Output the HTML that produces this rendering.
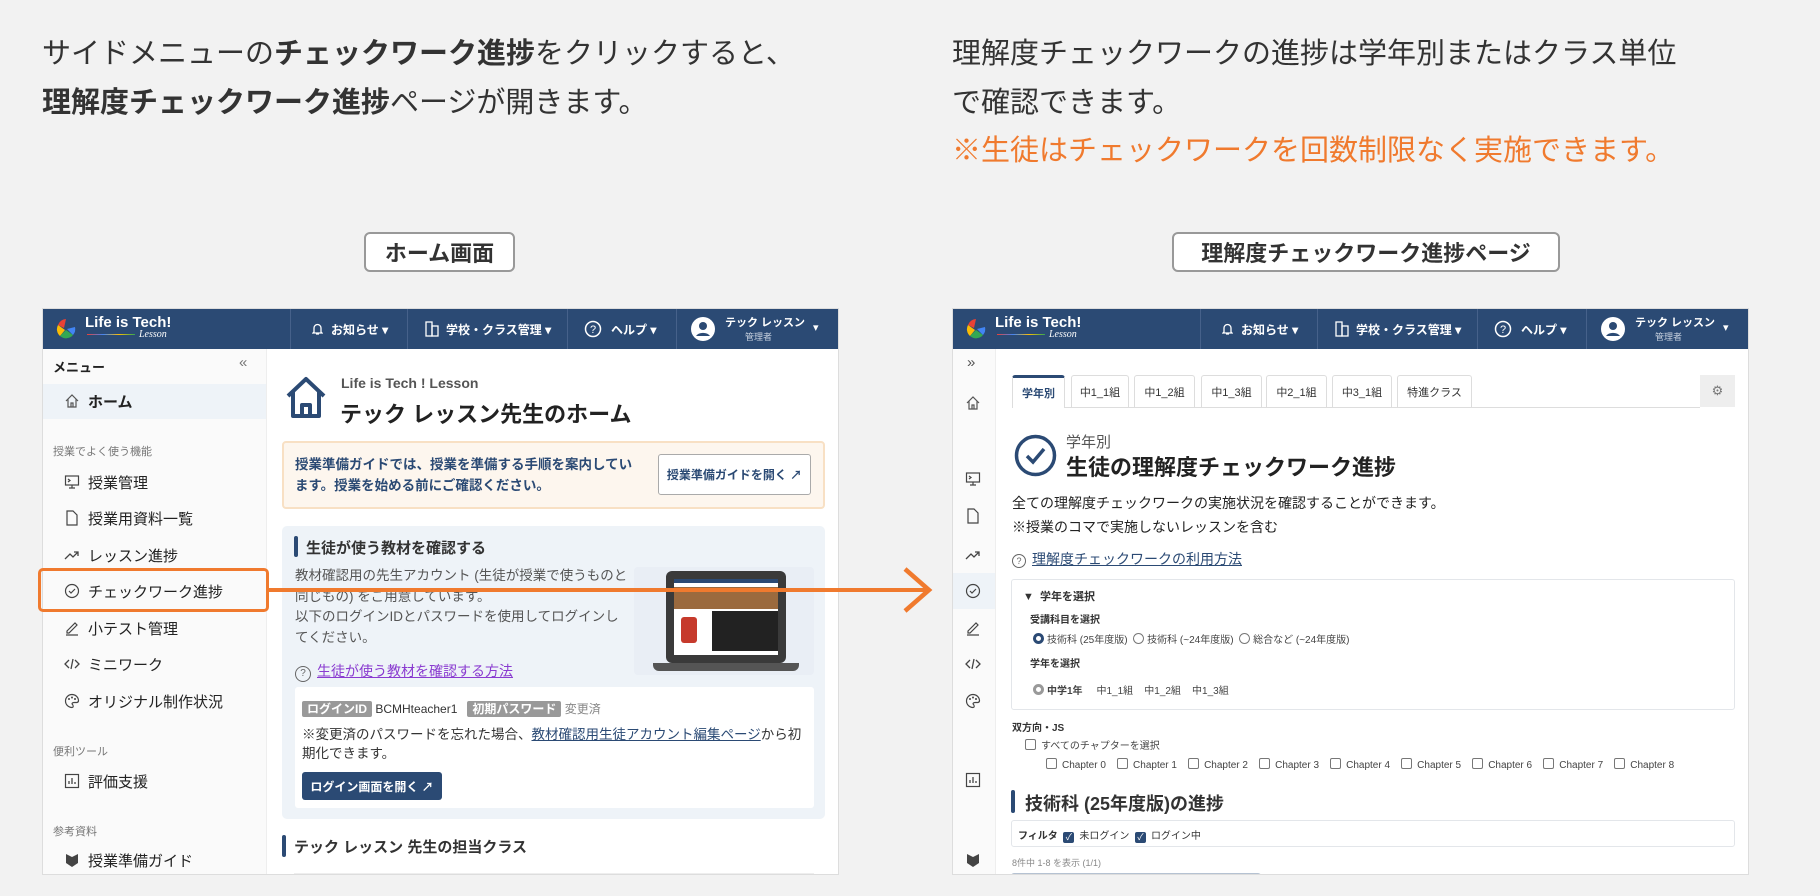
<!DOCTYPE html>
<html><head><meta charset="utf-8"><style>
*{margin:0;padding:0;box-sizing:border-box}
body{width:1820px;height:896px;background:#f2f2f2;font-family:"Liberation Sans","Noto Sans CJK JP",sans-serif;color:#222;position:relative;overflow:hidden}
.a{position:absolute;white-space:nowrap}
.big{font-size:29px;color:#333;line-height:1}
.label{position:absolute;top:232px;height:40px;border:2px solid #999;border-radius:6px;background:#fff;font-size:22px;font-weight:bold;color:#333;display:flex;align-items:center;justify-content:center}
.scr{position:absolute;top:308px;width:797px;height:567px;background:#fff;border:1px solid #ddd;overflow:hidden}
.nav{position:absolute;left:0;top:0;width:100%;height:40px;background:#2b4a74;color:#fff}
.nav .d{position:absolute;top:0;width:1px;height:40px;background:#46618a}
.nav .t{position:absolute;top:12px;font-size:12px;font-weight:bold}
.side{position:absolute;left:0;top:40px;bottom:0;background:#fafafa;border-right:1px solid #eee}
.it{position:absolute;left:0;width:224px;height:20px;font-size:15px;display:flex;align-items:center;color:#222}
.it svg{position:absolute;left:21px}
.it span{position:absolute;left:45px}
.sec{position:absolute;left:10px;font-size:11px;color:#777}
.ic{position:absolute;left:12px}
.tab{position:absolute;top:66px;height:32px;border:1px solid #ddd;border-bottom:none;font-size:11px;display:flex;align-items:center;justify-content:center;background:#fff;color:#333;border-radius:3px 3px 0 0}
.cb{display:inline-block;width:11px;height:11px;border:1px solid #777;border-radius:2px;vertical-align:-1px;margin-right:5px;background:#fff}
.rd{display:inline-block;width:11px;height:11px;border:1px solid #777;border-radius:50%;vertical-align:-1px;margin-right:3px}
</style></head><body>

<div class="a big" style="left:42px;top:40px">サイドメニューの<b>チェックワーク進捗</b>をクリックすると、</div>
<div class="a big" style="left:42px;top:89px"><b>理解度チェックワーク進捗</b>ページが開きます。</div>
<div class="a big" style="left:952px;top:40px">理解度チェックワークの進捗は学年別またはクラス単位</div>
<div class="a big" style="left:952px;top:89px">で確認できます。</div>
<div class="a big" style="left:952px;top:137px;color:#f07a2e">※生徒はチェックワークを回数制限なく実施できます。</div>

<div class="label" style="left:364px;width:151px">ホーム画面</div>
<div class="label" style="left:1172px;width:388px">理解度チェックワーク進捗ページ</div>

<!-- LEFT SCREEN -->
<div class="scr" style="left:42px">
 <div class="nav">
  <svg class="a" style="left:12px;top:8px" width="22" height="24" viewBox="0 0 22 24"><path d="M11 2 A9 9 0 0 0 3 8 L9 11Z" fill="#e94235"/><path d="M3 8 A9 9 0 0 0 5 19 L10 13Z" fill="#fbbc05"/><path d="M5 19 A9 9 0 0 0 18 18 L11 13Z" fill="#34a853"/><path d="M18 18 A9 9 0 0 0 20 10 L12 12Z" fill="#4285f4"/></svg>
  <div class="a" style="left:42px;top:5px;font-size:15px;font-weight:bold">Life is Tech!</div>
  <div class="a" style="left:44px;top:25px;width:48px;height:1px;background:linear-gradient(90deg,#e94235,#4285f4,#fbbc05,#34a853)"></div>
  <div class="a" style="left:96px;top:20px;font-size:10px;font-style:italic;font-family:'Liberation Serif',serif">Lesson</div>
  <div class="d" style="left:247px"></div><div class="d" style="left:364px"></div><div class="d" style="left:524px"></div><div class="d" style="left:633px"></div>
  <svg class="a" style="left:269px;top:13px" width="11" height="14" viewBox="0 0 11 14"><path d="M2 10V6a3.5 3.5 0 0 1 7 0v4l1 1H1z M4 12h3" stroke="#fff" fill="none" stroke-width="1.3"/></svg>
  <div class="t" style="left:288px">お知らせ ▾</div>
  <svg class="a" style="left:382px;top:12px" width="14" height="16" viewBox="0 0 14 16"><rect x="1" y="1" width="6" height="14" stroke="#fff" fill="none" stroke-width="1.3"/><rect x="7" y="5" width="6" height="10" stroke="#fff" fill="none" stroke-width="1.3"/></svg>
  <div class="t" style="left:403px">学校・クラス管理 ▾</div>
  <svg class="a" style="left:541px;top:11px" width="18" height="18" viewBox="0 0 18 18"><circle cx="9" cy="9" r="7.5" stroke="#fff" fill="none" stroke-width="1.5"/><text x="9" y="13" font-size="11" fill="#fff" text-anchor="middle" font-family="Liberation Sans">?</text></svg>
  <div class="t" style="left:568px">ヘルプ ▾</div>
  <svg class="a" style="left:648px;top:8px" width="24" height="24" viewBox="0 0 24 24"><circle cx="12" cy="12" r="12" fill="#fff"/><circle cx="12" cy="9" r="4" fill="#2b4a74"/><path d="M5 19a8 6 0 0 1 14 0z" fill="#2b4a74"/></svg>
  <div class="a" style="left:682px;top:5px;font-size:11px;font-weight:bold">テック レッスン</div>
  <div class="a" style="left:702px;top:21px;font-size:9px;color:#c8d2e0">管理者</div>
  <div class="a" style="left:770px;top:12px;font-size:11px">▾</div>
 </div>
 <div class="side" style="width:224px">
  <div class="a" style="left:10px;top:8px;font-size:13px;font-weight:bold">メニュー</div>
  <div class="a" style="left:196px;top:5px;font-size:15px;color:#777">«</div>
  <div class="a" style="left:0;top:35px;width:223px;height:35px;background:#eef3f8"></div>
 </div>
 <div class="it" style="top:82px;font-weight:bold"><svg width="16" height="16" viewBox="0 0 16 16"><path d="M2 8L8 2l6 6M4 6v8h8V6M7 14v-4h2v4" stroke="#555" fill="none" stroke-width="1.2"/></svg><span>ホーム</span></div>
 <div class="sec" style="top:134px">授業でよく使う機能</div>
 <div class="it" style="top:163px"><svg width="16" height="16" viewBox="0 0 16 16"><rect x="1.5" y="2" width="13" height="9" stroke="#444" fill="none" stroke-width="1.2"/><path d="M4 5l2 1.5L4 8M8 11v3M5 14h6" stroke="#444" fill="none" stroke-width="1.2"/></svg><span>授業管理</span></div>
 <div class="it" style="top:199px"><svg width="16" height="16" viewBox="0 0 16 16"><path d="M3 1h6l4 4v10H3z" stroke="#444" fill="none" stroke-width="1.2"/></svg><span>授業用資料一覧</span></div>
 <div class="it" style="top:236px"><svg width="16" height="16" viewBox="0 0 16 16"><path d="M1 12l5-5 3 3 5-5M10 5h4v4" stroke="#444" fill="none" stroke-width="1.3"/></svg><span>レッスン進捗</span></div>
 <div class="it" style="top:272px"><svg width="16" height="16" viewBox="0 0 16 16"><circle cx="8" cy="8" r="6.5" stroke="#444" fill="none" stroke-width="1.2"/><path d="M5 8l2 2 4-4" stroke="#444" fill="none" stroke-width="1.2"/></svg><span>チェックワーク進捗</span></div>
 <div class="it" style="top:309px"><svg width="16" height="16" viewBox="0 0 16 16"><path d="M3 11l8-8 2 2-8 8H3zM2 15h12" stroke="#444" fill="none" stroke-width="1.2"/></svg><span>小テスト管理</span></div>
 <div class="it" style="top:345px"><svg width="16" height="16" viewBox="0 0 16 16"><path d="M5 4L1 8l4 4M11 4l4 4-4 4M9 3L7 13" stroke="#444" fill="none" stroke-width="1.3"/></svg><span>ミニワーク</span></div>
 <div class="it" style="top:382px"><svg width="16" height="16" viewBox="0 0 16 16"><path d="M8 1.5a6.5 6.5 0 1 0 0 13c1.5 0 1.5-2 0.5-3s0-2 1.5-2h3a2 2 0 0 0 1.5-2A6.5 6.5 0 0 0 8 1.5z" stroke="#444" fill="none" stroke-width="1.2"/><circle cx="5" cy="6" r="1" fill="#444"/><circle cx="8" cy="4.5" r="1" fill="#444"/><circle cx="11" cy="6" r="1" fill="#444"/></svg><span>オリジナル制作状況</span></div>
 <div class="sec" style="top:434px">便利ツール</div>
 <div class="it" style="top:462px"><svg width="16" height="16" viewBox="0 0 16 16"><rect x="1.5" y="1.5" width="13" height="13" stroke="#444" fill="none" stroke-width="1.2"/><path d="M5 11V8M8 11V5M11 11V9" stroke="#444" stroke-width="1.3"/></svg><span>評価支援</span></div>
 <div class="sec" style="top:514px">参考資料</div>
 <div class="it" style="top:541px"><svg width="16" height="16" viewBox="0 0 16 16"><path d="M2 2l6 3 6-3v9l-6 4-6-4z" fill="#444"/></svg><span>授業準備ガイド</span></div>

 <!-- main -->
 <svg class="a" style="left:242px;top:67px" width="42" height="43" viewBox="0 0 42 43"><path d="M3 20L21 3l18 17M8 15v25h26V15M17 40V29h8v11" stroke="#2b4a74" fill="none" stroke-width="4" stroke-linejoin="round"/></svg>
 <div class="a" style="left:298px;top:66px;font-size:14px;color:#555;font-weight:bold">Life is Tech ! Lesson</div>
 <div class="a" style="left:297px;top:88px;font-size:22px;font-weight:bold">テック レッスン先生のホーム</div>
 <div class="a" style="left:239px;top:132px;width:543px;height:68px;background:#fdf6ee;border:2px solid #f8e0c4;border-radius:4px"></div>
 <div class="a" style="left:252px;top:145px;width:340px;white-space:normal;font-size:13.5px;font-weight:bold;color:#2b4a74;line-height:21px">授業準備ガイドでは、授業を準備する手順を案内しています。授業を始める前にご確認ください。</div>
 <div class="a" style="left:615px;top:145px;width:153px;height:41px;background:#fff;border:1px solid #aaa;border-radius:3px;font-size:12px;font-weight:bold;color:#2b4a74;display:flex;align-items:center;justify-content:center">授業準備ガイドを開く ↗</div>
 <div class="a" style="left:239px;top:217px;width:543px;height:293px;background:#eef3f8;border-radius:5px"></div>
 <div class="a" style="left:251px;top:227px;width:4px;height:21px;background:#2b4a74;border-radius:2px"></div>
 <div class="a" style="left:263px;top:228px;font-size:15px;font-weight:bold;color:#333">生徒が使う教材を確認する</div>
 <div class="a" style="left:252px;top:257px;width:336px;white-space:normal;font-size:13.5px;color:#555;line-height:20.5px">教材確認用の先生アカウント (生徒が授業で使うものと同じもの) をご用意しています。<br>以下のログインIDとパスワードを使用してログインしてください。</div>
 <div class="a" style="left:252px;top:352px;font-size:14px;color:#8a3bd0;text-decoration:underline"><span style="display:inline-block;width:16px;height:16px;border:1.5px solid #666;border-radius:50%;font-size:10px;color:#666;text-align:center;line-height:13px;text-decoration:none;margin-right:6px">?</span>生徒が使う教材を確認する方法</div>
 <div class="a" style="left:591px;top:258px;width:180px;height:108px;background:#e9eef5;border-radius:4px"></div>
 <div class="a" style="left:623px;top:262px;width:120px;height:92px;background:#3a3a3a;border-radius:6px"></div>
 <div class="a" style="left:631px;top:270px;width:104px;height:76px;background:#fff"></div>
 <div class="a" style="left:631px;top:270px;width:104px;height:4px;background:#2b4a74"></div>
 <div class="a" style="left:631px;top:278px;width:104px;height:22px;background:#9b6a3e"></div>
 <div class="a" style="left:669px;top:302px;width:66px;height:40px;background:#222"></div>
 <div class="a" style="left:638px;top:308px;width:16px;height:26px;background:#c63a2c;border-radius:3px"></div>
 <div class="a" style="left:610px;top:354px;width:146px;height:8px;background:#555;border-radius:0 0 6px 6px"></div>
 <div class="a" style="left:252px;top:378px;width:519px;height:121px;background:#fff;border-radius:3px"></div>
 <div class="a" style="left:259px;top:391px;font-size:12px;color:#333"><span style="background:#999;color:#fff;font-weight:bold;padding:1px 5px;border-radius:2px">ログインID</span> BCMHteacher1 &nbsp; <span style="background:#999;color:#fff;font-weight:bold;padding:1px 5px;border-radius:2px">初期パスワード</span> <span style="color:#888">変更済</span></div>
 <div class="a" style="left:259px;top:416px;width:505px;white-space:normal;font-size:13.5px;color:#333;line-height:19px">※変更済のパスワードを忘れた場合、<span style="color:#2b4a74;text-decoration:underline">教材確認用生徒アカウント編集ページ</span>から初期化できます。</div>
 <div class="a" style="left:259px;top:463px;width:140px;height:28px;background:#2b4a74;border-radius:3px;color:#fff;font-size:12px;font-weight:bold;display:flex;align-items:center;justify-content:center">ログイン画面を開く ↗</div>
 <div class="a" style="left:239px;top:526px;width:4px;height:22px;background:#2b4a74;border-radius:2px"></div>
 <div class="a" style="left:251px;top:527px;font-size:15px;font-weight:bold;color:#333">テック レッスン 先生の担当クラス</div>
 <div class="a" style="left:251px;top:564px;width:520px;height:3px;background:#eee"></div>
</div>

<!-- orange box and arrow -->
<div class="a" style="left:38px;top:568px;width:231px;height:44px;border:3px solid #f07a2e;border-radius:5px"></div>
<div class="a" style="left:269px;top:588px;width:658px;height:4px;background:#f07a2e"></div>
<svg class="a" style="left:900px;top:566px" width="34" height="48" viewBox="0 0 34 48"><path d="M5 3L29 24 5 45" stroke="#f07a2e" stroke-width="4.5" fill="none"/></svg>

<!-- RIGHT SCREEN -->
<div class="scr" style="left:952px">
 <div class="nav">
  <svg class="a" style="left:12px;top:8px" width="22" height="24" viewBox="0 0 22 24"><path d="M11 2 A9 9 0 0 0 3 8 L9 11Z" fill="#e94235"/><path d="M3 8 A9 9 0 0 0 5 19 L10 13Z" fill="#fbbc05"/><path d="M5 19 A9 9 0 0 0 18 18 L11 13Z" fill="#34a853"/><path d="M18 18 A9 9 0 0 0 20 10 L12 12Z" fill="#4285f4"/></svg>
  <div class="a" style="left:42px;top:5px;font-size:15px;font-weight:bold">Life is Tech!</div>
  <div class="a" style="left:44px;top:25px;width:48px;height:1px;background:linear-gradient(90deg,#e94235,#4285f4,#fbbc05,#34a853)"></div>
  <div class="a" style="left:96px;top:20px;font-size:10px;font-style:italic;font-family:'Liberation Serif',serif">Lesson</div>
  <div class="d" style="left:247px"></div><div class="d" style="left:364px"></div><div class="d" style="left:524px"></div><div class="d" style="left:633px"></div>
  <svg class="a" style="left:269px;top:13px" width="11" height="14" viewBox="0 0 11 14"><path d="M2 10V6a3.5 3.5 0 0 1 7 0v4l1 1H1z M4 12h3" stroke="#fff" fill="none" stroke-width="1.3"/></svg>
  <div class="t" style="left:288px">お知らせ ▾</div>
  <svg class="a" style="left:382px;top:12px" width="14" height="16" viewBox="0 0 14 16"><rect x="1" y="1" width="6" height="14" stroke="#fff" fill="none" stroke-width="1.3"/><rect x="7" y="5" width="6" height="10" stroke="#fff" fill="none" stroke-width="1.3"/></svg>
  <div class="t" style="left:403px">学校・クラス管理 ▾</div>
  <svg class="a" style="left:541px;top:11px" width="18" height="18" viewBox="0 0 18 18"><circle cx="9" cy="9" r="7.5" stroke="#fff" fill="none" stroke-width="1.5"/><text x="9" y="13" font-size="11" fill="#fff" text-anchor="middle" font-family="Liberation Sans">?</text></svg>
  <div class="t" style="left:568px">ヘルプ ▾</div>
  <svg class="a" style="left:648px;top:8px" width="24" height="24" viewBox="0 0 24 24"><circle cx="12" cy="12" r="12" fill="#fff"/><circle cx="12" cy="9" r="4" fill="#2b4a74"/><path d="M5 19a8 6 0 0 1 14 0z" fill="#2b4a74"/></svg>
  <div class="a" style="left:682px;top:5px;font-size:11px;font-weight:bold">テック レッスン</div>
  <div class="a" style="left:702px;top:21px;font-size:9px;color:#c8d2e0">管理者</div>
  <div class="a" style="left:770px;top:12px;font-size:11px">▾</div>
 </div>
 <div class="side" style="width:43px">
  <div class="a" style="left:0;top:224px;width:42px;height:36px;background:#eef3f8"></div>
 </div>
 <div class="a" style="left:14px;top:45px;font-size:15px;color:#555">»</div>
 <svg class="ic" style="top:86px" width="16" height="16" viewBox="0 0 16 16"><path d="M2 8L8 2l6 6M4 6v8h8V6M7 14v-4h2v4" stroke="#555" fill="none" stroke-width="1.2"/></svg>
 <svg class="ic" style="top:162px" width="16" height="16" viewBox="0 0 16 16"><rect x="1.5" y="2" width="13" height="9" stroke="#444" fill="none" stroke-width="1.2"/><path d="M4 5l2 1.5L4 8M8 11v3M5 14h6" stroke="#444" fill="none" stroke-width="1.2"/></svg>
 <svg class="ic" style="top:199px" width="16" height="16" viewBox="0 0 16 16"><path d="M3 1h6l4 4v10H3z" stroke="#444" fill="none" stroke-width="1.2"/></svg>
 <svg class="ic" style="top:238px" width="16" height="16" viewBox="0 0 16 16"><path d="M1 12l5-5 3 3 5-5M10 5h4v4" stroke="#444" fill="none" stroke-width="1.3"/></svg>
 <svg class="ic" style="top:274px" width="16" height="16" viewBox="0 0 16 16"><circle cx="8" cy="8" r="6.5" stroke="#444" fill="none" stroke-width="1.2"/><path d="M5 8l2 2 4-4" stroke="#444" fill="none" stroke-width="1.2"/></svg>
 <svg class="ic" style="top:311px" width="16" height="16" viewBox="0 0 16 16"><path d="M3 11l8-8 2 2-8 8H3zM2 15h12" stroke="#444" fill="none" stroke-width="1.2"/></svg>
 <svg class="ic" style="top:347px" width="16" height="16" viewBox="0 0 16 16"><path d="M5 4L1 8l4 4M11 4l4 4-4 4M9 3L7 13" stroke="#444" fill="none" stroke-width="1.3"/></svg>
 <svg class="ic" style="top:384px" width="16" height="16" viewBox="0 0 16 16"><path d="M8 1.5a6.5 6.5 0 1 0 0 13c1.5 0 1.5-2 0.5-3s0-2 1.5-2h3a2 2 0 0 0 1.5-2A6.5 6.5 0 0 0 8 1.5z" stroke="#444" fill="none" stroke-width="1.2"/><circle cx="5" cy="6" r="1" fill="#444"/><circle cx="8" cy="4.5" r="1" fill="#444"/><circle cx="11" cy="6" r="1" fill="#444"/></svg>
 <svg class="ic" style="top:463px" width="16" height="16" viewBox="0 0 16 16"><rect x="1.5" y="1.5" width="13" height="13" stroke="#444" fill="none" stroke-width="1.2"/><path d="M5 11V8M8 11V5M11 11V9" stroke="#444" stroke-width="1.3"/></svg>
 <svg class="ic" style="top:543px" width="16" height="16" viewBox="0 0 16 16"><path d="M2 2l6 3 6-3v9l-6 4-6-4z" fill="#444"/></svg>

 <div class="a" style="left:59px;top:98px;width:688px;height:1px;background:#ddd"></div>
 <div class="tab" style="left:59px;width:53px;border-top:3px solid #2b4a74;color:#2b4a74;font-weight:bold;height:33px">学年別</div>
 <div class="tab" style="left:118px;width:58px">中1_1組</div>
 <div class="tab" style="left:181px;width:61px">中1_2組</div>
 <div class="tab" style="left:248px;width:61px">中1_3組</div>
 <div class="tab" style="left:313px;width:61px">中2_1組</div>
 <div class="tab" style="left:379px;width:60px">中3_1組</div>
 <div class="tab" style="left:444px;width:75px">特進クラス</div>
 <div class="a" style="left:747px;top:66px;width:35px;height:32px;background:#eee;color:#777;font-size:13px;text-align:center;line-height:32px">⚙</div>

 <svg class="a" style="left:61px;top:125px" width="43" height="43" viewBox="0 0 43 43"><circle cx="21.5" cy="21.5" r="19" stroke="#2b4a74" stroke-width="3.5" fill="none"/><path d="M13 22l6 6 11-13" stroke="#2b4a74" stroke-width="3.5" fill="none"/></svg>
 <div class="a" style="left:113px;top:122px;font-size:15px;color:#555">学年別</div>
 <div class="a" style="left:113px;top:141px;font-size:22px;font-weight:bold">生徒の理解度チェックワーク進捗</div>
 <div class="a" style="left:59px;top:184px;font-size:14px">全ての理解度チェックワークの実施状況を確認することができます。</div>
 <div class="a" style="left:59px;top:208px;font-size:14px">※授業のコマで実施しないレッスンを含む</div>
 <div class="a" style="left:59px;top:240px;font-size:14px;color:#2b4a74;text-decoration:underline"><span style="display:inline-block;width:14px;height:14px;border:1.3px solid #666;border-radius:50%;font-size:9px;color:#666;text-align:center;line-height:12px;margin-right:6px">?</span>理解度チェックワークの利用方法</div>
 <div class="a" style="left:58px;top:270px;width:724px;height:131px;border:1px solid #e3e6ea;border-radius:3px"></div>
 <div class="a" style="left:70px;top:279px;font-size:11px;font-weight:bold;color:#333">▼ &nbsp;学年を選択</div>
 <div class="a" style="left:77px;top:302px;font-size:10px;font-weight:bold;color:#333">受講科目を選択</div>
 <div class="a" style="left:80px;top:322px;font-size:10px;color:#444"><span class="rd" style="border:3px solid #2b4a74"></span>技術科 (25年度版) &nbsp;<span class="rd"></span>技術科 (~24年度版) &nbsp;<span class="rd"></span>総合など (~24年度版)</div>
 <div class="a" style="left:77px;top:346px;font-size:10px;font-weight:bold;color:#333">学年を選択</div>
 <div class="a" style="left:80px;top:373px;font-size:10px;color:#444"><span class="rd" style="border:3px solid #999"></span><b>中学1年</b> &nbsp;&nbsp;&nbsp; 中1_1組 &nbsp;&nbsp; 中1_2組 &nbsp;&nbsp; 中1_3組</div>
 <div class="a" style="left:59px;top:410px;font-size:10px;font-weight:bold;color:#333">双方向・JS</div>
 <div class="a" style="left:72px;top:428px;font-size:10px;color:#444"><span class="cb"></span>すべてのチャプターを選択</div>
 <div class="a" style="left:93px;top:449px;font-size:10px;color:#444"><span class="cb"></span>Chapter 0 &nbsp;&nbsp; <span class="cb"></span>Chapter 1 &nbsp;&nbsp; <span class="cb"></span>Chapter 2 &nbsp;&nbsp; <span class="cb"></span>Chapter 3 &nbsp;&nbsp; <span class="cb"></span>Chapter 4 &nbsp;&nbsp; <span class="cb"></span>Chapter 5 &nbsp;&nbsp; <span class="cb"></span>Chapter 6 &nbsp;&nbsp; <span class="cb"></span>Chapter 7 &nbsp;&nbsp; <span class="cb"></span>Chapter 8</div>
 <div class="a" style="left:58px;top:481px;width:4px;height:23px;background:#2b4a74;border-radius:2px"></div>
 <div class="a" style="left:72px;top:481px;font-size:18px;font-weight:bold;color:#333">技術科 (25年度版)の進捗</div>
 <div class="a" style="left:58px;top:511px;width:724px;height:27px;border:1px solid #e3e6ea;border-radius:3px"></div>
 <div class="a" style="left:65px;top:518px;font-size:10px;color:#333"><b>フィルタ</b> &nbsp;<span class="cb" style="background:#2b4a74;border-color:#2b4a74;color:#fff;font-size:9px;line-height:9px;text-align:center">✓</span>未ログイン &nbsp;<span class="cb" style="background:#2b4a74;border-color:#2b4a74;color:#fff;font-size:9px;line-height:9px;text-align:center">✓</span>ログイン中</div>
 <div class="a" style="left:59px;top:547px;font-size:9px;color:#888">8件中 1-8 を表示 (1/1)</div>
 <div class="a" style="left:58px;top:564px;width:250px;height:4px;border:1px solid #b5c2d2;border-bottom:none;border-radius:3px 3px 0 0"></div>
</div>
</body></html>
